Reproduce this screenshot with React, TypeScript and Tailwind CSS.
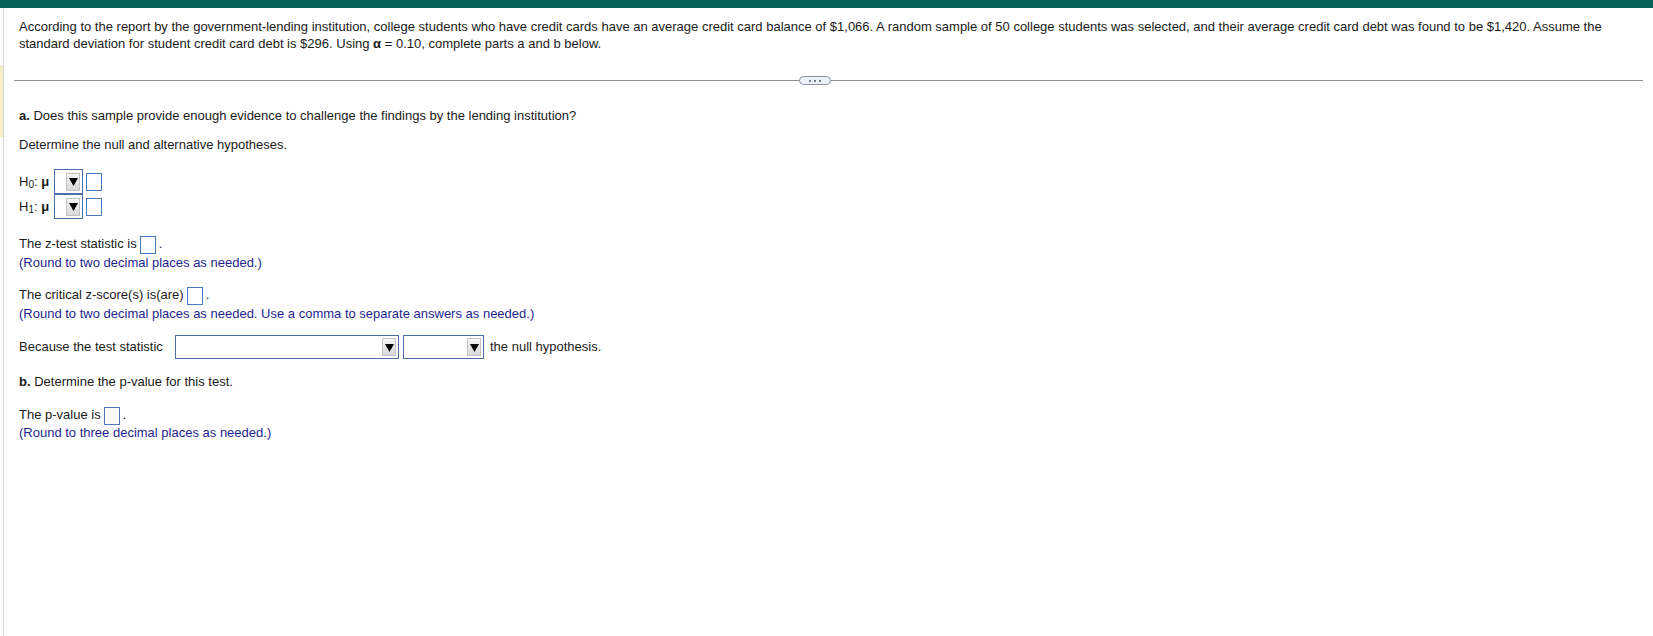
import React from 'react';

function Blank() {
  return <span className="inline-block w-[16px] h-[18px] -my-[2px] border border-[#4a7ab8] bg-white align-middle mx-[3px]" />;
}

function Arrow({ mr }: { mr: string }) {
  return (
    <span className={`flex items-center justify-center w-[14px] h-[18px] bg-gradient-to-b from-[#f6f6f6] to-[#d8d8d8] border border-[#c4c4c4] ${mr}`}>
      <svg width="9" height="9" viewBox="0 0 9 9"><path d="M0 1h9L4.5 9z" fill="#000" /></svg>
    </span>
  );
}

function Select({ width }: { width: string }) {
  return (
    <span className={`inline-flex items-center justify-end h-[24px] border border-[#4a6fa8] bg-white ${width}`}>
      <Arrow mr="mr-[2px]" />
    </span>
  );
}

function Hyp({ sub }: { sub: string }) {
  return (
    <div className="flex items-center h-[25px]">
      <span className="w-[35px]">
        H<sub className="text-[10px]">{sub}</sub>: <span className="font-bold">μ</span>
      </span>
      <span className="inline-flex items-center justify-end w-[29px] h-[25px] border border-[#4a6fa8] bg-white">
        <Arrow mr="mr-[2px]" />
      </span>
      <span className="inline-block w-[16px] h-[18px] border border-[#4a7ab8] ml-[3px]" />
    </div>
  );
}

export default function App() {
  return (
    <div className="w-[1653px] h-[636px] bg-white relative overflow-hidden text-[13px] leading-[16px] text-[#1a1a1a]" style={{ fontFamily: '"Liberation Sans", Arial, sans-serif' }}>
      <div className="h-[8px] bg-[#05615a]" />
      <div className="absolute left-0 top-[65px] w-[3px] h-[72px] bg-[#f6edc9]" />
      <div className="flex">
        <div className="w-[4px] shrink-0 h-[628px] border-r border-[#d4d4d4]" />
        <div className="flex-1 pl-[15px] pr-[30px]">
          <p className="mt-[10px] leading-[17px]">
            According to the report by the government-lending institution, college students who have credit cards have an average credit card balance of $1,066. A random sample of 50 college students was selected, and their average credit card debt was found to be $1,420. Assume the standard deviation for student credit card debt is $296. Using <b>α</b> = 0.10, complete parts a and b below.
          </p>
          <div className="relative mt-[28px] -ml-[5px] -mr-[20px] h-px bg-[#8f8f8f]">
            <span className="absolute left-[785px] -top-[4px] w-[32px] h-[9px] rounded-full border border-[#8a93a8] bg-[#eef2f8] flex items-center justify-center gap-[3px]">
              <span className="w-[2px] h-[2px] bg-[#4a5670] rounded-full" />
              <span className="w-[2px] h-[2px] bg-[#4a5670] rounded-full" />
              <span className="w-[2px] h-[2px] bg-[#4a5670] rounded-full" />
            </span>
          </div>
          <p className="mt-[27px]"><span className="font-bold">a.</span> Does this sample provide enough evidence to challenge the findings by the lending institution?</p>
          <p className="mt-[13px]">Determine the null and alternative hypotheses.</p>
          <div className="mt-[16px]">
            <Hyp sub="0" />
            <Hyp sub="1" />
          </div>
          <p className="mt-[17px]">The z-test statistic is<Blank />.</p>
          <p className="text-[#1f1f8f] mt-[3px]">(Round to two decimal places as needed.)</p>
          <p className="mt-[16px]">The critical z-score(s) is(are)<Blank />.</p>
          <p className="text-[#1f1f8f] mt-[3px]">(Round to two decimal places as needed. Use a comma to separate answers as needed.)</p>
          <div className="mt-[13px] flex items-center gap-[4px]">
            <span className="w-[152px]">Because the test statistic</span>
            <Select width="w-[224px]" />
            <Select width="w-[81px]" />
            <span className="ml-[2px]">the null hypothesis.</span>
          </div>
          <p className="mt-[15px]"><span className="font-bold">b.</span> Determine the p-value for this test.</p>
          <p className="mt-[17px]">The p-value is<Blank />.</p>
          <p className="text-[#1f1f8f] mt-[2px]">(Round to three decimal places as needed.)</p>
        </div>
      </div>
    </div>
  );
}
